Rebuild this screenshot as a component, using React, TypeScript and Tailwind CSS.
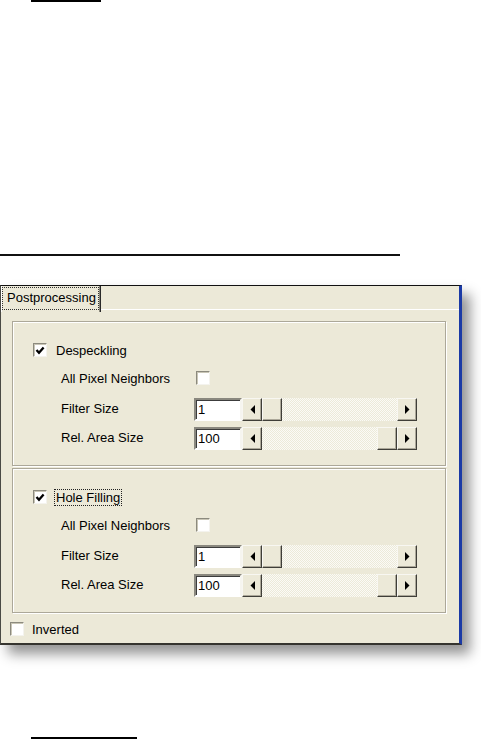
import React from "react";

const font = "font-['Liberation_Sans',Arial,sans-serif] text-[13px] text-black leading-none";

function Checkbox({ checked }: { checked?: boolean }) {
  return (
    <span className="flex h-[14px] w-[14px] shrink-0 items-center justify-center border border-[#8c8a7e] border-b-[#f4f3ee] border-r-[#f4f3ee] bg-white shadow-[inset_1px_1px_0_#c9c6b6]">
      {checked && (
        <svg width="10" height="9" viewBox="0 0 10 9">
          <polyline points="1.5,4 4,6.8 8.6,1.5" fill="none" stroke="#000" strokeWidth="2.3" />
        </svg>
      )}
    </span>
  );
}

function Edit({ value }: { value: string }) {
  return (
    <div className="flex h-[23px] w-[48px] shrink-0 items-center border-2 border-[#8a887f] border-b-white border-r-[#f6f5f0] bg-white pl-[2px] shadow-[inset_1px_1px_0_#3c3c3c]">
      {value}
    </div>
  );
}

function Raised({ children, className = "" }: { children?: React.ReactNode; className?: string }) {
  return (
    <div
      className={`flex h-full w-[20px] shrink-0 items-center justify-center border border-[#f8f7f2] border-b-[#3f3e38] border-r-[#3f3e38] bg-[#ece9d8] shadow-[inset_-1px_-1px_0_#aca899] ${className}`}
    >
      {children}
    </div>
  );
}

function Arrow({ dir }: { dir: "left" | "right" }) {
  return (
    <svg width="5" height="9" viewBox="0 0 5 9">
      {dir === "left" ? <polygon points="5,0 5,9 0.5,4.5" fill="#000" /> : <polygon points="0,0 0,9 4.5,4.5" fill="#000" />}
    </svg>
  );
}

function Scrollbar({ atEnd }: { atEnd?: boolean }) {
  return (
    <div className="flex h-[23px] w-[175px] shrink-0">
      <Raised>
        <Arrow dir="left" />
      </Raised>
      <div
        className={`flex flex-1 bg-[repeating-conic-gradient(#ecead9_0_25%,#fbfaf6_0_50%)] bg-[length:2px_2px] ${
          atEnd ? "justify-end" : "justify-start"
        }`}
      >
        <Raised />
      </div>
      <Raised>
        <Arrow dir="right" />
      </Raised>
    </div>
  );
}

function Group({ title, focused }: { title: string; focused?: boolean }) {
  return (
    <div className="flex flex-col border border-[#aca899] pb-[15px] pt-[20px] shadow-[inset_1px_1px_0_#fff,1px_1px_0_#fff]">
      <div className="flex h-[16px] items-center pl-[20px]">
        <Checkbox checked />
        <span className={`ml-[7px] px-[1px] py-[1px] border border-dotted ${focused ? "border-[#222]" : "border-transparent"}`}>
          {title}
        </span>
      </div>
      <div className="mt-[12px] flex h-[16px] items-center pl-[48px]">
        <span className="w-[133px]">All Pixel Neighbors</span>
        <span className="ml-[2px]">
          <Checkbox />
        </span>
      </div>
      <div className="mt-[12px] flex h-[23px] items-center pl-[48px]">
        <span className="w-[133px] pb-[3px]">Filter Size</span>
        <Edit value="1" />
        <Scrollbar />
      </div>
      <div className="mt-[6px] flex h-[23px] items-center pl-[48px]">
        <span className="w-[133px] pb-[3px]">Rel. Area Size</span>
        <Edit value="100" />
        <Scrollbar atEnd />
      </div>
    </div>
  );
}

export default function App() {
  return (
    <div className={`flex h-[739px] w-[481px] flex-col overflow-hidden bg-white ${font}`}>
      <div className="ml-[31px] h-[2px] w-[70px] bg-black" />
      <div className="mt-[252px] h-[2px] w-[400px] bg-[#111]" />

      <div className="mt-[29px] flex h-[360px] w-[462px] flex-col border-b-2 border-l border-r-[3px] border-t border-b-[#35342f] border-l-[#4a4a44] border-r-[#1b3aa6] border-t-[#111] bg-[#ece9d8] shadow-[8px_9px_12px_rgba(0,0,0,0.42)]">
        <div className="flex h-[24px] shrink-0">
          <div className="h-[26px] w-[100px] border-r border-r-[#2a2a2a] pl-[1px] pt-[1px] shadow-[inset_1px_0_0_#fff,inset_-1px_0_0_#8a887c]">
            <div className="flex h-[23px] w-[97px] items-center border border-dotted border-[#333] pb-[2px] pl-[4px]">
              Postprocessing
            </div>
          </div>
          <div className="flex-1 border-b border-b-white" />
        </div>

        <div className="flex flex-1 flex-col pl-[11px] pr-[13px] pt-[11px]">
          <Group title="Despeckling" />
          <div className="mt-[2px]">
            <Group title="Hole Filling" focused />
          </div>
          <div className="mt-[8px] flex h-[16px] items-center -ml-[2px]">
            <Checkbox />
            <span className="ml-[8px]">Inverted</span>
          </div>
        </div>
      </div>

      <div className="ml-[31px] mt-[92px] h-[2px] w-[106px] bg-black" />
    </div>
  );
}
